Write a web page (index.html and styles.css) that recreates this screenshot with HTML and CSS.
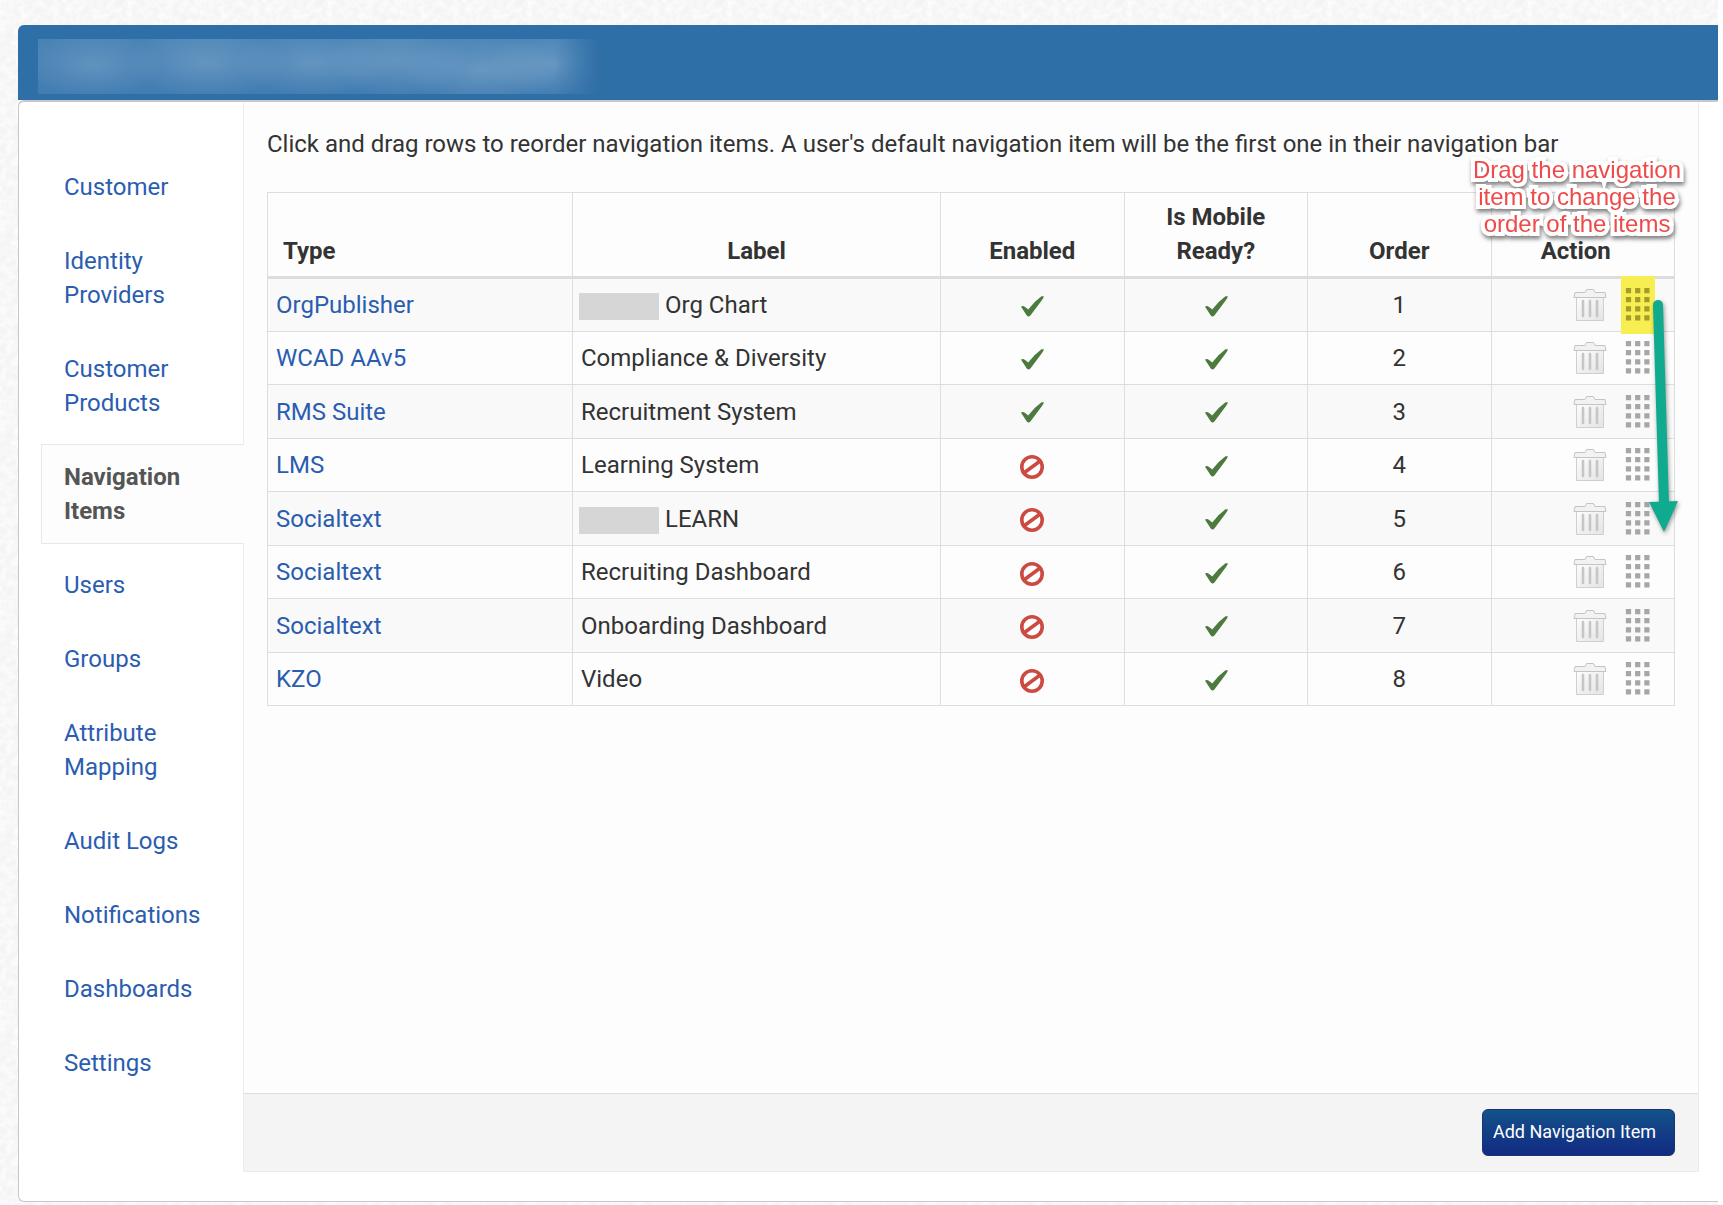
FILE: index.html
```html
<!doctype html>
<html lang="en">
<head>
  <meta charset="UTF-8" />
  <meta name="viewport" content="width=device-width, initial-scale=1.0" />
  <title>Navigation Items</title>
  <link rel="stylesheet" href="styles.css">
</head>
<body>
  <!-- shared icons -->
  <svg class="icon-defs" aria-hidden="true">
    <defs>
      <linearGradient id="bin-fill" x1="0" y1="0" x2="1" y2="1">
        <stop offset="0" stop-color="#fdfdfd" />
        <stop offset="1" stop-color="#e4e4e4" />
      </linearGradient>
    </defs>
    <symbol id="icon-check" viewBox="0 0 24 24">
      <path d="M1.2 12 Q1.2 10.8 3 10.9 Q4.5 11 8.2 14.6 Q14 6.5 21.5 1.2 H23.8 Q24 2.2 22 5 L10.6 20.2 Q8.6 22.6 6.8 20.4 Z" fill="#4c7a3f" />
    </symbol>
    <symbol id="icon-ban" viewBox="0 0 24 24">
      <circle cx="12" cy="12" r="10.2" fill="#fff" stroke="#cc4b40" stroke-width="3.6" />
      <path d="M4.5 17.5 L19.5 6.5" stroke="#cc4b40" stroke-width="3.6" />
    </symbol>
    <symbol id="icon-trash" viewBox="0 0 34 34">
      <path d="M3.5 9 H30.5 V32.5 H3.5 Z" fill="url(#bin-fill)" stroke="#cfcfcf" />
      <path d="M12 4.5 L13.5 1.5 H20.5 L22 4.5 H32 L33 9.5 H1 L2 4.5 Z" fill="#f2f2f2" stroke="#c4c4c4" />
      <path d="M10 13 V28 M17 13 V28 M24 13 V28" stroke="#c6c6c6" stroke-width="2.6" stroke-linecap="round" />
    </symbol>
    <symbol id="icon-grip" viewBox="0 0 26 34">
      <path d="M3.5 0 V34 M12.7 0 V34 M21.9 0 V34" stroke="currentColor" stroke-width="5.2" stroke-dasharray="5.2 3.9" />
    </symbol>
  </svg>

  <div class="page">
    <header class="page-header">
      <div class="customer-name"></div>
    </header>

    <div class="panel">
      <nav class="sidebar">
        <a href="#">Customer</a>
        <a href="#">Identity Providers</a>
        <a href="#">Customer Products</a>
        <a href="#" class="active">Navigation Items</a>
        <a href="#">Users</a>
        <a href="#">Groups</a>
        <a href="#">Attribute Mapping</a>
        <a href="#">Audit Logs</a>
        <a href="#">Notifications</a>
        <a href="#">Dashboards</a>
        <a href="#">Settings</a>
      </nav>

      <main class="content">
        <div class="content-body">
          <p class="intro">Click and drag rows to reorder navigation items. A user's default navigation item will be the first one in their navigation bar</p>

          <div class="table-wrap">
            <table class="nav-table">
              <colgroup>
                <col class="col-type">
                <col class="col-label">
                <col span="4">
              </colgroup>
              <thead>
                <tr>
                  <th class="col-head-type">Type</th>
                  <th>Label</th>
                  <th>Enabled</th>
                  <th>Is Mobile Ready?</th>
                  <th>Order</th>
                  <th class="col-head-action">Action</th>
                </tr>
              </thead>
              <tbody id="nav-rows"></tbody>
            </table>

            <div class="drag-note">Drag the navigation item to change the order of the items</div>
            <svg class="drag-arrow" viewBox="0 0 40 244" aria-hidden="true">
              <path d="M15 9 L21 208" stroke="#10ab8e" stroke-width="10" stroke-linecap="round" />
              <path d="M6 206 L35 205 L21 236 Z" fill="#10ab8e" />
            </svg>
          </div>
        </div>

        <footer class="content-footer">
          <button type="button" class="add-btn">Add Navigation Item</button>
        </footer>
      </main>
    </div>
  </div>

  <script>
    const items = [
      { type: 'OrgPublisher', label: 'Org Chart', hidden: true, enabled: true },
      { type: 'WCAD AAv5', label: 'Compliance & Diversity', enabled: true },
      { type: 'RMS Suite', label: 'Recruitment System', enabled: true },
      { type: 'LMS', label: 'Learning System', enabled: false },
      { type: 'Socialtext', label: 'LEARN', hidden: true, enabled: false },
      { type: 'Socialtext', label: 'Recruiting Dashboard', enabled: false },
      { type: 'Socialtext', label: 'Onboarding Dashboard', enabled: false },
      { type: 'KZO', label: 'Video', enabled: false }
    ];

    const icon = (name) => `<svg class="icon ${name}"><use href="#icon-${name}" /></svg>`;

    document.getElementById('nav-rows').innerHTML = items.map((item, i) => `
      <tr>
        <td><a href="#">${item.type}</a></td>
        <td>${item.hidden ? '<span class="redacted"></span>' : ''}${item.label.replace('&', '&amp;')}</td>
        <td class="center">${icon(item.enabled ? 'check' : 'ban')}</td>
        <td class="center">${icon('check')}</td>
        <td class="center">${i + 1}</td>
        <td>
          <div class="actions">
            <button type="button" aria-label="Delete">${icon('trash')}</button>
            <button type="button" class="handle" aria-label="Drag">${icon('grip')}</button>
          </div>
        </td>
      </tr>`).join('');
  </script>
</body>
</html>
```
FILE: styles.css
```css
* {
  box-sizing: border-box;
}

body {
  margin: 0;
  /* light paper texture */
  background: #f4f4f4 url("data:image/svg+xml,%3Csvg xmlns='http://www.w3.org/2000/svg' width='200' height='200'%3E%3Cfilter id='n'%3E%3CfeTurbulence type='fractalNoise' baseFrequency='0.15' numOctaves='3' stitchTiles='stitch'/%3E%3CfeColorMatrix values='0 0 0 0 1 0 0 0 0 1 0 0 0 0 1 1.6 0 0 0 -0.5'/%3E%3C/filter%3E%3Crect width='200' height='200' filter='url(%23n)'/%3E%3C/svg%3E");
  font-family: Roboto, 'Helvetica Neue', Arial, sans-serif;
  font-size: 24px;
  line-height: 34px;
  color: #333;
}

a {
  color: #2a5db0;
  text-decoration: none;
}

.icon-defs {
  position: absolute;
  width: 0;
  height: 0;
}

.page {
  min-height: 100vh;
  padding: 25px 0 3px 18px;
  border-right: 5px solid #fff;
  display: flex;
  flex-direction: column;
}

.page-header {
  height: 75px;
  padding: 14px 20px;
  background: #2f6fa7;
  border-radius: 6px 0 0 0;
}

/* blurred customer name */
.customer-name {
  width: 562px;
  max-width: 100%;
  height: 55px;
  background:
    radial-gradient(ellipse 70px 32px at 10% 48%, rgba(255, 255, 255, 0.14), transparent),
    radial-gradient(ellipse 80px 36px at 30% 42%, rgba(255, 255, 255, 0.16), transparent),
    radial-gradient(ellipse 80px 32px at 49% 44%, rgba(255, 255, 255, 0.16), transparent),
    radial-gradient(ellipse 70px 36px at 64% 40%, rgba(255, 255, 255, 0.16), transparent),
    radial-gradient(ellipse 80px 36px at 79% 56%, rgba(255, 255, 255, 0.18), transparent),
    radial-gradient(ellipse 70px 32px at 92% 45%, rgba(255, 255, 255, 0.16), transparent),
    linear-gradient(#4a84b6, #427db2);
  -webkit-mask-image: linear-gradient(90deg, #000 92%, transparent);
  mask-image: linear-gradient(90deg, #000 92%, transparent);
}

.panel {
  flex: 1;
  display: flex;
  padding: 0 19px 29px 22px;
  background: #fff;
  border: 1px solid #c8c8c8;
  border-top-width: 2px;
  border-right: none;
  border-radius: 6px 0 0 6px;
}

.sidebar {
  flex: 0 0 202px;
  display: flex;
  flex-direction: column;
  gap: 8px;
  padding-top: 52px;
}

.sidebar a {
  padding: 15px 22px;
  border: 1px solid transparent;
  border-right: none;
}

.sidebar .active {
  position: relative;
  z-index: 1;
  margin-right: -1px;
  background: #fdfdfd;
  border-color: #e8e8e8;
  color: #555;
  font-weight: 700;
}

.content {
  flex: 1;
  display: flex;
  flex-direction: column;
  min-width: 0;
  background: #fdfdfd;
  border: 1px solid #ececec;
  border-top: none;
}

.content-body {
  flex: 1;
  padding: 25px 23px;
}

.intro {
  margin: 0 0 31px;
}

.table-wrap {
  position: relative;
}

.nav-table {
  width: 100%;
  table-layout: fixed;
  border-collapse: collapse;
}

.col-type {
  width: 305px;
}

.col-label {
  width: 368px;
}

.nav-table th,
.nav-table td {
  border: 1px solid #ddd;
  padding: 0 8px;
}

.nav-table th {
  padding: 7px 32px 8px;
  border-bottom: 3px solid #ddd;
  vertical-align: bottom;
  text-align: center;
}

.nav-table .col-head-type {
  padding-left: 15px;
  text-align: left;
}

.nav-table .col-head-action {
  padding-right: 46px;
}

.nav-table td {
  height: 53px;
}

.nav-table tbody tr:nth-child(odd) td {
  height: 54px;
  background: #f9f9f9;
}

.nav-table td.center {
  text-align: center;
}

.redacted {
  display: inline-block;
  width: 80px;
  height: 27px;
  margin: 0 6px 0 -2px;
  vertical-align: middle;
  background: #d6d6d6;
}

.icon {
  display: inline-block;
  vertical-align: middle;
}

.icon.check,
.icon.ban {
  width: 24px;
  height: 24px;
}

.icon.trash {
  width: 34px;
  height: 34px;
}

.icon.grip {
  width: 26px;
  height: 34px;
}

.actions {
  display: flex;
  justify-content: flex-end;
  align-items: center;
  gap: 14px;
  margin-right: 11px;
}

.actions button {
  display: flex;
  padding: 0;
  border: none;
  background: none;
  color: #a6a6a6;
  cursor: pointer;
}

.actions .handle {
  margin: -12px 0;
  padding: 12px 4px;
  cursor: move;
}

tr:first-child .handle {
  background: #f7ef52;
  color: #a39b2c;
}

/* Callout over the table */
.drag-note {
  position: absolute;
  top: -36px;
  right: -14px;
  width: 224px;
  font: 24px/27px 'Liberation Sans', Arial, sans-serif;
  text-align: center;
  color: #ef4a4a;
  -webkit-text-stroke: 8px #fff;
  paint-order: stroke fill;
  stroke-linejoin: round;
  filter: drop-shadow(1px 3px 2px rgba(0, 0, 0, 0.5));
}

.drag-arrow {
  position: absolute;
  top: 104px;
  right: -8px;
  width: 40px;
  height: 244px;
  fill: none;
  filter: drop-shadow(1px 2px 2px rgba(0, 0, 0, 0.4));
}

.content-footer {
  display: flex;
  justify-content: flex-end;
  padding: 15px 23px;
  background: #f4f4f4;
  border-top: 1px solid #ddd;
}

.add-btn {
  height: 47px;
  padding: 0 18px 2px 10px;
  border: 1px solid #17366f;
  border-radius: 6px;
  background: linear-gradient(#135289, #122a83);
  color: #fff;
  font: 18px Roboto, sans-serif;
  cursor: pointer;
}
```
